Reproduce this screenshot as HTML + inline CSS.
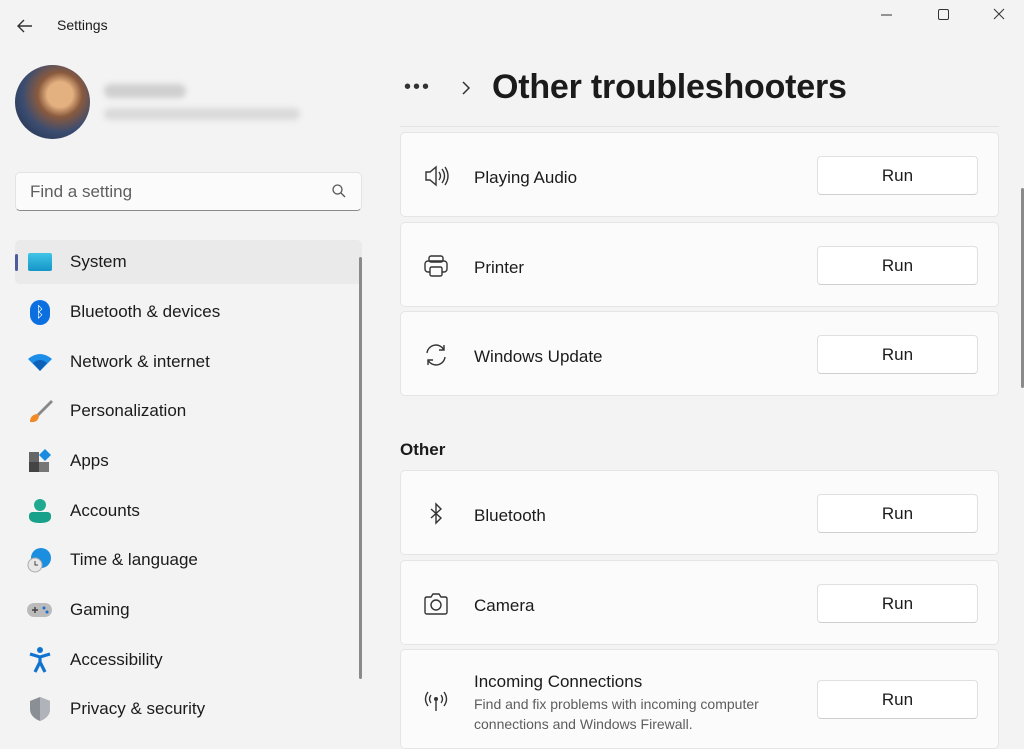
<!DOCTYPE html>
<html><head><style>
*{box-sizing:border-box;margin:0;padding:0}
body{width:1024px;height:742px;overflow:hidden;background:#f3f3f3;font-family:"Liberation Sans",sans-serif;color:#1b1b1b;position:relative}
.a{position:absolute}
.nav{position:absolute;left:15px;width:347px;height:44px;display:flex;align-items:center;font-size:17px}
.nav .ic{width:26px;height:26px;margin-left:12px;margin-right:17px;display:flex;align-items:center;justify-content:center}
.card{position:absolute;left:400px;width:599px;background:#fbfbfb;border:1px solid #e5e5e5;border-radius:5px}
.card .t{position:absolute;left:73px;font-size:17px}
.card .i{position:absolute;left:22px;width:26px;height:26px}
.btn{position:absolute;left:416px;width:161px;height:39px;background:#fff;border:1px solid #e0e0e0;border-bottom-color:#cfcfcf;border-radius:4px;font-size:17px;display:flex;align-items:center;justify-content:center}
</style></head><body>
<svg class="a" style="left:15px;top:16px" width="20" height="20" viewBox="0 0 20 20"><path d="M17 10H3M9 4L3 10l6 6" stroke="#333" stroke-width="1.4" fill="none"/></svg>
<div class="a" style="left:57px;top:17px;font-size:14px">Settings</div>
<svg class="a" style="left:878px;top:5px" width="130" height="20"><path d="M3 10h11" stroke="#333"/><rect x="60.5" y="4.5" width="10" height="10" rx="1.5" fill="none" stroke="#333"/><path d="M116 4l10 10M126 4l-10 10" stroke="#333"/></svg>
<div class="a" style="left:15px;top:65px;width:75px;height:74px;border-radius:50%;background:radial-gradient(circle at 60% 40%,#e3b07f 0 20%,#8a5a3e 35%,#3a4c70 60%,#1d2840)"></div>
<div class="a" style="left:104px;top:84px;width:82px;height:14px;background:#cfcfcf;border-radius:7px;filter:blur(3px)"></div>
<div class="a" style="left:104px;top:108px;width:196px;height:12px;background:#dadada;border-radius:6px;filter:blur(3px)"></div>
<div class="a" style="left:15px;top:172px;width:347px;height:39px;background:#fbfbfb;border:1px solid #e3e3e3;border-bottom:1px solid #8a8a8a;border-radius:5px;font-size:17px;color:#5f5f5f;padding:9px 0 0 14px">Find a setting</div>
<svg class="a" style="left:331px;top:183px" width="16" height="16"><circle cx="6.5" cy="6.5" r="4.5" fill="none" stroke="#555" stroke-width="1.3"/><path d="M10 10l4 4" stroke="#555" stroke-width="1.3"/></svg>
<div class="nav" style="top:240px;background:#eaeaea;border-radius:5px"><div class="a" style="left:0;top:14px;width:3px;height:17px;background:#4d5a9c;border-radius:2px"></div><div class="ic"><div style="width:24px;height:18px;background:linear-gradient(#3fc4e6,#1595c8);border-radius:2px"></div></div>System</div>
<div class="nav" style="top:290px"><div class="ic"><div style="width:20px;height:25px;background:#0b6fe0;border-radius:10px;color:#fff;font-size:15px;text-align:center;line-height:25px">ᛒ</div></div>Bluetooth &amp; devices</div>
<div class="nav" style="top:340px"><div class="ic"><svg width="26" height="20"><path d="M1 7Q13-3 25 7L13 19Z" fill="#1c8de8"/><path d="M6 11Q13 5 20 11L13 19Z" fill="#0d5fb8"/></svg></div>Network &amp; internet</div>
<div class="nav" style="top:389px"><div class="ic"><svg width="26" height="26"><path d="M24 2L10 16l2 2L26 4Z" fill="#888"/><path d="M3 24q0-7 7-8l2 2q-1 7-9 6z" fill="#f08a26"/></svg></div>Personalization</div>
<div class="nav" style="top:439px"><div class="ic"><svg width="24" height="24"><rect x="1" y="3" width="10" height="10" fill="#666"/><rect x="1" y="13" width="10" height="10" fill="#444"/><rect x="11" y="13" width="10" height="10" fill="#777"/><path d="M17 0l6 6-6 6-6-6z" fill="#1b8be0"/></svg></div>Apps</div>
<div class="nav" style="top:489px"><div class="ic"><svg width="24" height="26"><circle cx="12" cy="7" r="6" fill="#1fa98f"/><path d="M1 18q0-4 4-4h14q4 0 4 4v1q0 6-11 6T1 19z" fill="#17a08a"/></svg></div>Accounts</div>
<div class="nav" style="top:538px"><div class="ic"><svg width="26" height="26"><circle cx="14" cy="11" r="10" fill="#1c8ee0"/><circle cx="8" cy="18" r="7" fill="#e8e8e8" stroke="#aaa"/><path d="M8 14v4h3" stroke="#444" fill="none"/></svg></div>Time &amp; language</div>
<div class="nav" style="top:588px"><div class="ic"><svg width="26" height="18"><rect x="0" y="2" width="25" height="14" rx="7" fill="#bbb"/><path d="M5 9h6M8 6v6" stroke="#444" stroke-width="1.5"/><circle cx="17" cy="7" r="1.5" fill="#1c6fd0"/><circle cx="20" cy="11" r="1.5" fill="#1c6fd0"/></svg></div>Gaming</div>
<div class="nav" style="top:638px"><div class="ic"><svg width="24" height="26"><circle cx="12" cy="3" r="3" fill="#1073d0"/><path d="M2 7l10 3 10-3M12 10v5l-5 10M12 15l5 10" stroke="#1073d0" stroke-width="3.2" fill="none"/></svg></div>Accessibility</div>
<div class="nav" style="top:687px"><div class="ic"><svg width="24" height="26"><path d="M12 1l10 4v8q0 8-10 12Q2 21 2 13V5z" fill="#8a8f96"/><path d="M12 1l10 4v8q0 8-10 12z" fill="#b0b4ba"/></svg></div>Privacy &amp; security</div>
<div class="a" style="left:359px;top:257px;width:3px;height:422px;background:#8a8a8a;border-radius:2px"></div>
<div class="a" style="left:404px;top:76px;font-size:20px;letter-spacing:2px;color:#333">•••</div>
<svg class="a" style="left:460px;top:80px" width="12" height="16"><path d="M3 2l6 6-6 6" stroke="#333" stroke-width="1.5" fill="none"/></svg>
<div class="a" style="left:492px;top:68px;font-size:34px;font-weight:bold;letter-spacing:-.2px">Other troubleshooters</div>
<div class="a" style="left:400px;top:126px;width:599px;height:1px;background:#e3e3e3"></div>
<div class="a" style="left:1021px;top:188px;width:3px;height:200px;background:#8a8a8a;border-radius:2px"></div>

<div class="card" style="top:132px;height:85px"><svg class="i" style="top:30px" viewBox="0 0 26 26"><path d="M3 9h4l6-5v18l-6-5H3z" fill="none" stroke="#333" stroke-width="1.4"/><path d="M16 9q3 4 0 8M19 6q5 7 0 14M22 4q6 9 0 18" fill="none" stroke="#333" stroke-width="1.4"/></svg><div class="t" style="top:35px">Playing Audio</div><div class="btn" style="top:23px">Run</div></div>
<div class="card" style="top:222px;height:85px"><svg class="i" style="top:30px" viewBox="0 0 26 26"><rect x="6" y="3" width="14" height="6" rx="2" fill="none" stroke="#333" stroke-width="1.4"/><rect x="2" y="8" width="22" height="11" rx="3" fill="none" stroke="#333" stroke-width="1.4"/><rect x="7" y="14" width="12" height="9" rx="1.5" fill="#fbfbfb" stroke="#333" stroke-width="1.4"/></svg><div class="t" style="top:35px">Printer</div><div class="btn" style="top:23px">Run</div></div>
<div class="card" style="top:311px;height:85px"><svg class="i" style="top:30px" viewBox="0 0 26 26"><path d="M4 11A9 9 0 0 1 21 8M22 15A9 9 0 0 1 5 18" fill="none" stroke="#333" stroke-width="1.4"/><path d="M21 3v5h-5M5 23v-5h5" fill="none" stroke="#333" stroke-width="1.4"/></svg><div class="t" style="top:35px">Windows Update</div><div class="btn" style="top:23px">Run</div></div>
<div class="a" style="left:400px;top:440px;font-size:17px;font-weight:bold">Other</div>
<div class="card" style="top:470px;height:85px"><svg class="i" style="top:30px" viewBox="0 0 26 26"><path d="M8 8l10 9-5 5V3l5 5-10 9" fill="none" stroke="#333" stroke-width="1.4"/></svg><div class="t" style="top:35px">Bluetooth</div><div class="btn" style="top:23px">Run</div></div>
<div class="card" style="top:560px;height:85px"><svg class="i" style="top:30px" viewBox="0 0 26 26"><path d="M2 8q0-2 2-2h4l2-3h6l2 3h4q2 0 2 2v13q0 2-2 2H4q-2 0-2-2z" fill="none" stroke="#333" stroke-width="1.4"/><circle cx="13" cy="14" r="5" fill="none" stroke="#333" stroke-width="1.4"/></svg><div class="t" style="top:35px">Camera</div><div class="btn" style="top:23px">Run</div></div>
<div class="card" style="top:649px;height:100px"><svg class="i" style="top:38px" viewBox="0 0 26 26"><circle cx="13" cy="11" r="2" fill="#333"/><path d="M13 13v10M8 7q-3 4 0 8M18 7q3 4 0 8M5 4q-5 7 0 14M21 4q5 7 0 14" fill="none" stroke="#333" stroke-width="1.4"/></svg><div class="t" style="top:22px">Incoming Connections</div><div class="a" style="left:73px;top:44px;font-size:14px;color:#5d5d5d;line-height:20px">Find and fix problems with incoming computer<br>connections and Windows Firewall.</div><div class="btn" style="top:30px">Run</div></div>
</body></html>
